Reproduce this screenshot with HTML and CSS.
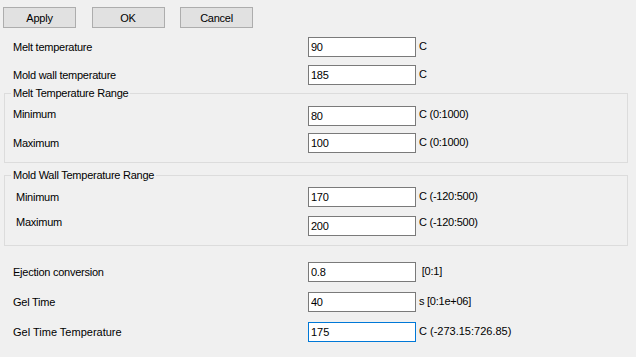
FILE: index.html
```html
<!DOCTYPE html>
<html lang="en">
    <head>
        <title>Temperature Settings</title>
        <link rel="stylesheet" href="styles.css">
    </head>
    <body>
        <div class="toolbar">
            <button class="btn">Apply</button>
            <button class="btn">OK</button>
            <button class="btn">Cancel</button>
        </div>

        <div class="section top">
            <div class="row">
                <label class="label">Melt temperature</label>
                <input class="field" type="text" value="90">
                <span class="unit">C</span>
            </div>
            <div class="row">
                <label class="label">Mold wall temperature</label>
                <input class="field" type="text" value="185">
                <span class="unit">C</span>
            </div>
        </div>

        <fieldset class="group group1">
            <legend>Melt Temperature Range</legend>
            <div class="row lift">
                <label class="label">Minimum</label>
                <input class="field" type="text" value="80">
                <span class="unit">C (0:1000)</span>
            </div>
            <div class="row">
                <label class="label">Maximum</label>
                <input class="field" type="text" value="100">
                <span class="unit">C (0:1000)</span>
            </div>
        </fieldset>

        <fieldset class="group group2">
            <legend>Mold Wall Temperature Range</legend>
            <div class="row">
                <label class="label indent">Minimum</label>
                <input class="field" type="text" value="170">
                <span class="unit">C (-120:500)</span>
            </div>
            <div class="row lift2">
                <label class="label indent">Maximum</label>
                <input class="field" type="text" value="200">
                <span class="unit">C (-120:500)</span>
            </div>
        </fieldset>

        <div class="section bottom">
            <div class="row">
                <label class="label">Ejection conversion</label>
                <input class="field" type="text" value="0.8">
                <span class="unit">&nbsp;[0:1]</span>
            </div>
            <div class="row">
                <label class="label">Gel Time</label>
                <input class="field" type="text" value="40">
                <span class="unit">s [0:1e+06]</span>
            </div>
            <div class="row wide">
                <label class="label">Gel Time Temperature</label>
                <input class="field focused" type="text" value="175">
                <span class="unit">C (-273.15:726.85)</span>
            </div>
        </div>
    </body>
</html>
```

FILE: styles.css
```css
body{margin: 0; background-color: #f0f0f0; font-family: "Liberation Sans", Arial, sans-serif; font-size: 11px; color: #000; letter-spacing: -0.25px;}

.toolbar{display: flex; gap: 15.5px; padding: 7px 0 0 3px;}
.btn{width: 73px; height: 21px; margin: 0; padding: 0; background-color: #e1e1e1; border: 1px solid #adadad; font-family: inherit; font-size: 11px; letter-spacing: inherit; color: #000;}

.section{display: flex; flex-direction: column; padding-left: 13px;}
.top{margin-top: 9px; gap: 8px;}
.bottom{margin-top: 16px; gap: 10px;}

.row{display: flex; align-items: center; height: 20px; line-height: 13px;}
.label{width: 295px; flex-shrink: 0;}
.label.indent{padding-left: 3px; box-sizing: border-box;}
.field{box-sizing: border-box; width: 108px; height: 20px; margin: 0; padding: 0 2px; border: 1px solid #7a7a7a; background: #fff; font-family: inherit; font-size: 11px; letter-spacing: inherit; color: #000; outline: none;}
.field.focused{border-color: #0078d7;}
.unit{margin-left: 3px; margin-bottom: 2px;}
.row.lift .label, .row.lift .unit{margin-bottom: 4px;}
.row.lift2 .label, .row.lift2 .unit{margin-bottom: 7px;}
.row.wide{letter-spacing: 0;}

.group{display: flex; flex-direction: column; margin: 0 8px 0 4px; padding: 0 0 9px 8px; border: 1px solid #dcdcdc; min-width: 0;}
.group legend{margin-left: -2px; padding: 0 2px; line-height: 13px;}
.group1{margin-top: 2px; padding-top: 6px; gap: 7px;}
.group2{margin-top: 6px; padding-top: 5px; gap: 9px;}
```
